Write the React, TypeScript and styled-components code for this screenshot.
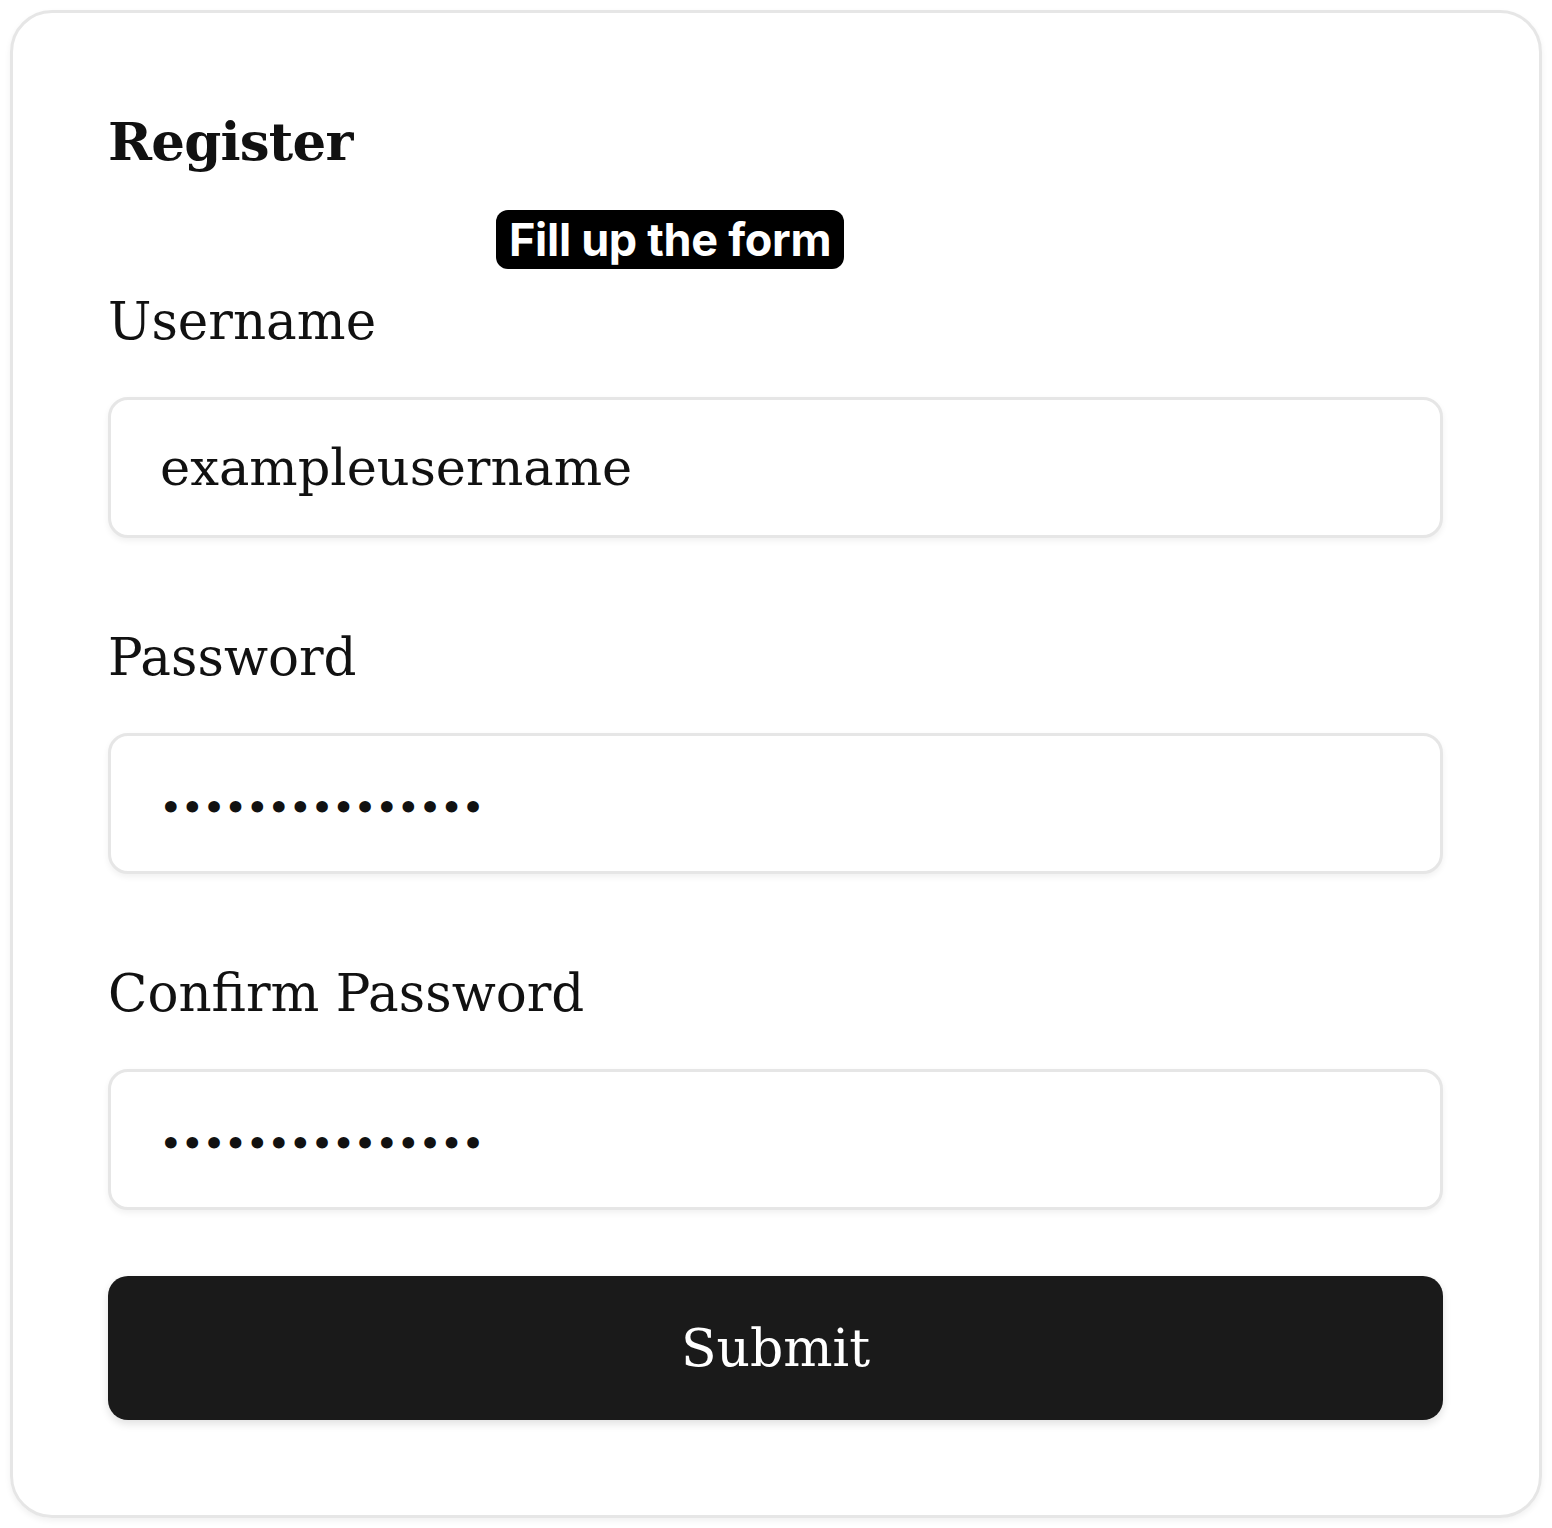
import React from "react";
import styled, { createGlobalStyle } from "styled-components";

const GlobalStyle = createGlobalStyle`
  html, body {
    margin: 0;
    padding: 0;
    background: #ffffff;
  }
  body {
    font-family: "DejaVu Serif", "Liberation Serif", serif;
    color: #111111;
  }
`;

const fields = [
  { label: "Username", value: "exampleusername", type: "text" },
  { label: "Password", value: "passwordpasswor", type: "password" },
  { label: "Confirm Password", value: "passwordpasswor", type: "password" },
];

export default function App() {
  return (
    <>
      <GlobalStyle />
      <Card>
        <Title>Register</Title>
        <Badge>Fill up the form</Badge>
        <Form onSubmit={(e) => e.preventDefault()}>
          {fields.map((f) => (
            <Field key={f.label}>
              <Label>{f.label}</Label>
              <Input type={f.type} defaultValue={f.value} readOnly />
            </Field>
          ))}
          <SubmitButton type="submit">Submit</SubmitButton>
        </Form>
      </Card>
    </>
  );
}

const Card = styled.div`
  margin: 10px;
  height: 1508px;
  box-sizing: border-box;
  border: 3px solid #e6e6e6;
  border-radius: 42px;
  padding: 88px 96px 0 95px;
  box-shadow: 0 3px 6px rgba(0, 0, 0, 0.06);
  display: flex;
  flex-direction: column;
`;

const Title = styled.h1`
  margin: 0;
  font-size: 53px;
  line-height: 80px;
  font-weight: 700;
  letter-spacing: -0.8px;
  color: #111;
`;

const Badge = styled.div`
  align-self: flex-start;
  margin: 29px 0 0 388px;
  height: 59px;
  padding: 0 13px;
  box-sizing: border-box;
  background: #000;
  border-radius: 12px;
  color: #fff;
  font-family: Inter, "Liberation Sans", sans-serif;
  font-weight: 700;
  font-size: 45px;
  line-height: 59px;
  letter-spacing: -0.3px;
`;

const Form = styled.form`
  display: flex;
  flex-direction: column;
  margin-top: 17px;
`;

const Field = styled.div`
  display: flex;
  flex-direction: column;
  & + & {
    margin-top: 84px;
  }
`;

const Label = styled.label`
  font-size: 51.5px;
  line-height: 70px;
  color: #111;
  margin-bottom: 41px;
`;

const Input = styled.input`
  height: 141px;
  box-sizing: border-box;
  border: 3px solid #e6e6e6;
  border-radius: 20px;
  padding: 0 49px;
  font-family: "DejaVu Serif", "Liberation Serif", serif;
  font-size: 51px;
  color: #111;
  background: #fff;
  box-shadow: 0 3px 6px rgba(0, 0, 0, 0.06);
  outline: none;
  &[type="password"] {
    font-size: 40px;
    letter-spacing: -2px;
    padding-left: 48px;
    padding-top: 6px;
  }
`;

const SubmitButton = styled.button`
  margin-top: 66px;
  height: 144px;
  border: none;
  border-radius: 20px;
  background: #1a1a1a;
  color: #fff;
  font-family: "DejaVu Serif", "Liberation Serif", serif;
  font-size: 52px;
  cursor: pointer;
  box-shadow: 0 4px 8px rgba(0, 0, 0, 0.12);
`;
